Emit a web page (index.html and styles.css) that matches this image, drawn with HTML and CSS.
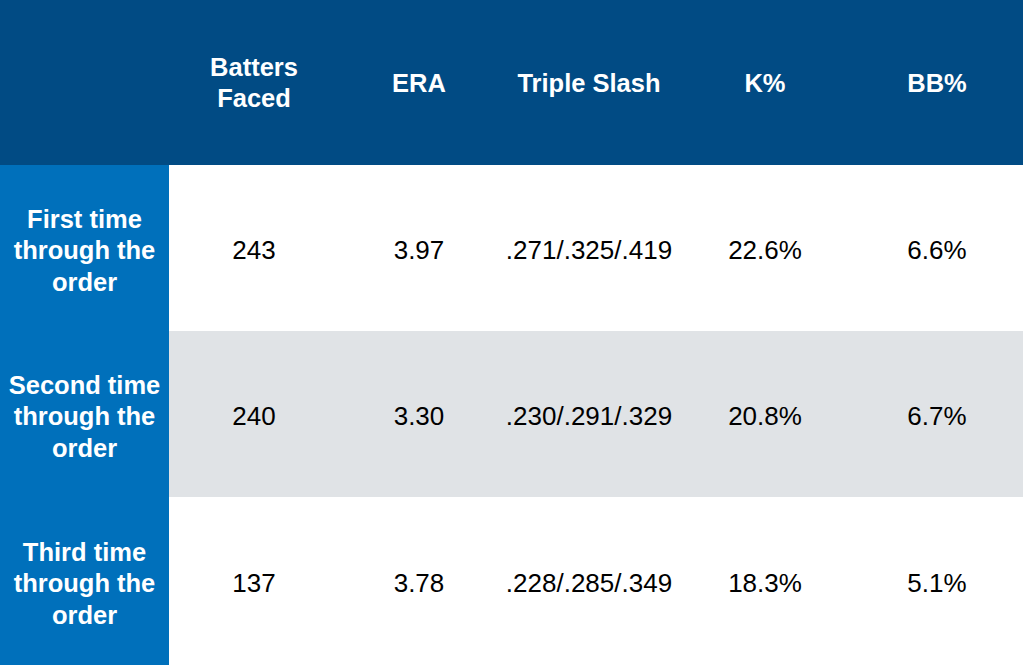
FILE: index.html
```html
<!DOCTYPE html>
<html>
<head>
<meta charset="utf-8">
<link rel="stylesheet" href="styles.css">
</head>
<body>
<div class="table">
  <div class="row head">
    <div class="cell corner"></div>
    <div class="cell">Batters<br>Faced</div>
    <div class="cell">ERA</div>
    <div class="cell">Triple Slash</div>
    <div class="cell">K%</div>
    <div class="cell">BB%</div>
  </div>
  <div class="row">
    <div class="cell label">First time<br>through the<br>order</div>
    <div class="cell">243</div>
    <div class="cell">3.97</div>
    <div class="cell">.271/.325/.419</div>
    <div class="cell">22.6%</div>
    <div class="cell">6.6%</div>
  </div>
  <div class="row alt">
    <div class="cell label">Second time<br>through the<br>order</div>
    <div class="cell">240</div>
    <div class="cell">3.30</div>
    <div class="cell">.230/.291/.329</div>
    <div class="cell">20.8%</div>
    <div class="cell">6.7%</div>
  </div>
  <div class="row last">
    <div class="cell label">Third time<br>through the<br>order</div>
    <div class="cell">137</div>
    <div class="cell">3.78</div>
    <div class="cell">.228/.285/.349</div>
    <div class="cell">18.3%</div>
    <div class="cell">5.1%</div>
  </div>
</div>
</body>
</html>
```
FILE: styles.css
```css
html, body {
  margin: 0;
  padding: 0;
  background: #ffffff;
}
.table {
  width: 1023px;
  height: 665px;
  display: grid;
  grid-template-rows: 165px 166px 166px 168px;
  font-family: "Liberation Sans", Arial, sans-serif;
}
.row {
  display: grid;
  grid-template-columns: 169px 170px 160px 180px 172px 172px;
  background: #ffffff;
  color: #000000;
  font-size: 26px;
  line-height: 31px;
}
.row.alt {
  background: #e0e3e6;
}
.row.head {
  background: #014b84;
  color: #ffffff;
  font-weight: bold;
  font-size: 25.5px;
}
.cell {
  display: flex;
  align-items: center;
  justify-content: center;
  text-align: center;
  padding-top: 5px;
}
.row.head .cell {
  padding-top: 1px;
}
.cell.label {
  background: #0070bb;
  color: #ffffff;
  font-weight: bold;
  font-size: 25.5px;
  line-height: 31.5px;
  padding-top: 6px;
}
```
